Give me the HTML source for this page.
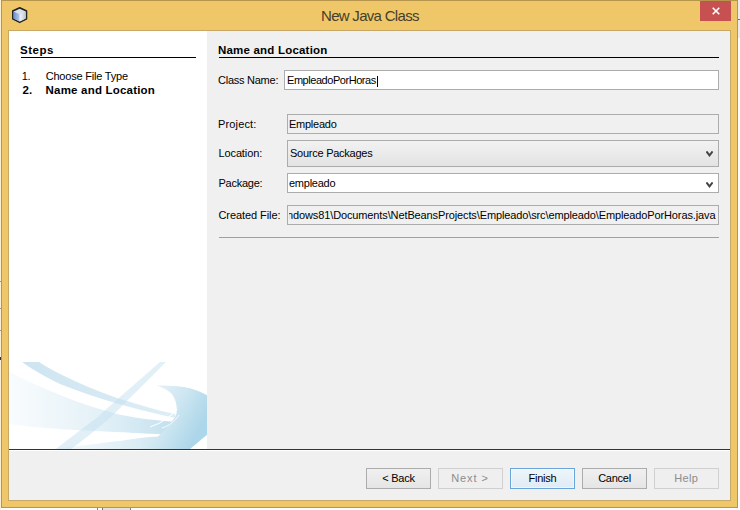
<!DOCTYPE html>
<html><head><meta charset="utf-8">
<style>
*{margin:0;padding:0;box-sizing:border-box}
html,body{width:740px;height:510px;overflow:hidden;background:#fff;position:relative;font-family:"Liberation Sans",sans-serif;-webkit-font-smoothing:antialiased}
.a{position:absolute}
.t{position:absolute;white-space:nowrap;font-size:11px;color:#000;line-height:13px;letter-spacing:-0.25px}
.b{font-weight:bold;font-size:11.5px;letter-spacing:0.2px}
#frame{left:1px;top:0;width:737px;height:508px;background:#efc768;border:1px solid #b5964c}
#content{left:8px;top:30px;width:723px;height:471px;border:1px solid #c8a866;background:#f0f0f0;box-shadow:inset 0 0 0 1px #f9f1e0}
#left{left:9px;top:31px;width:198px;height:418px;background:#fff}
.field{position:absolute;border:1px solid #acacac;background:#fff}
.btn{position:absolute;top:468px;width:65px;height:21px;border:1px solid #acacac;background:linear-gradient(#f0f0f0,#e5e5e5);font-size:11px;text-align:center;line-height:19px;color:#000;letter-spacing:-0.25px}
</style></head><body>
<div class="a" style="left:0;top:0;width:1px;height:510px;background:#fbefd6"></div>
<div id="frame" class="a"></div>
<div class="a" style="left:0;top:281px;width:1px;height:1px;background:#999"></div><div class="a" style="left:0;top:308px;width:1px;height:1px;background:#999"></div><div class="a" style="left:0;top:330px;width:1px;height:1px;background:#999"></div><div class="a" style="left:0;top:357px;width:1px;height:3px;background:#333"></div>
<!-- title bar icon -->
<svg class="a" style="left:11px;top:6px" width="18" height="18" viewBox="0 0 18 18">
  <defs>
    <linearGradient id="cl" x1="0" x2="1" y1="0" y2="0"><stop offset="0" stop-color="#6a8fd2"/><stop offset="1" stop-color="#b6cbea"/></linearGradient>
    <linearGradient id="cr" x1="0" x2="1" y1="0" y2="0"><stop offset="0" stop-color="#f2f6fa"/><stop offset="1" stop-color="#bcc8d4"/></linearGradient>
    <linearGradient id="ct" x1="0" x2="0" y1="0" y2="1"><stop offset="0" stop-color="#e8eef4"/><stop offset="1" stop-color="#d6e0ea"/></linearGradient>
  </defs>
  <path d="M8.7 1.5 L15.7 4.8 L15.7 13 L8.7 16.6 L1.6 13 L1.6 4.8 Z" fill="#222" stroke="#222" stroke-width="1.1" stroke-linejoin="round"/>
  <path d="M8.7 2.7 L14.7 5.4 L14.7 12.5 L8.7 15.4 L2.6 12.5 L2.6 5.4 Z" fill="#d8e2ec"/>
  <path d="M2.6 5.6 L8.7 8.2 L8.7 15.4 L2.6 12.5 Z" fill="url(#cl)"/>
  <path d="M8.7 8.2 L14.7 5.6 L14.7 12.5 L8.7 15.4 Z" fill="url(#cr)"/>
</svg>
<div class="t" style="left:321px;top:7px;font-size:15px;line-height:17px;letter-spacing:-0.7px;color:#463e2c">New Java Class</div>
<div class="a" style="left:700px;top:1px;width:31px;height:20px;background:#c75050"></div>
<svg class="a" style="left:712px;top:7.3px" width="8" height="8" viewBox="0 0 8 8"><path d="M0.7 0.7 L7.3 7.3 M7.3 0.7 L0.7 7.3" stroke="#fff" stroke-width="1.6"/></svg>

<div id="content" class="a"></div>
<div id="left" class="a"></div>
<svg class="a" style="left:9px;top:355px" width="198" height="94" viewBox="9 355 198 94">
  <defs>
    <linearGradient id="gB" x1="9" x2="185" y1="0" y2="0" gradientUnits="userSpaceOnUse"><stop offset="0" stop-color="#d4e9f3" stop-opacity="0.15"/><stop offset="0.55" stop-color="#c8e3f0" stop-opacity="0.55"/><stop offset="1" stop-color="#b8dbeb" stop-opacity="0.95"/></linearGradient>
    <linearGradient id="gE" x1="40" x2="190" y1="0" y2="0" gradientUnits="userSpaceOnUse"><stop offset="0" stop-color="#d4e9f3" stop-opacity="0.1"/><stop offset="1" stop-color="#bcdcec" stop-opacity="0.9"/></linearGradient>
    <linearGradient id="gA" x1="20" x2="180" y1="362" y2="415" gradientUnits="userSpaceOnUse"><stop offset="0" stop-color="#c8e2ef" stop-opacity="0.9"/><stop offset="1" stop-color="#c4e0ee" stop-opacity="0.55"/></linearGradient>
    <linearGradient id="gD" x1="155" x2="208" y1="386" y2="415" gradientUnits="userSpaceOnUse"><stop offset="0" stop-color="#e6f2f8"/><stop offset="0.5" stop-color="#cde6f1"/><stop offset="1" stop-color="#acd6e9"/></linearGradient>
  </defs>
  <path d="M9 372 C25 380 45 389 60 395 C80 403 98 409 117 414 C140 419 160 421 178 422 L182 435 C150 434 135 433 117 432 C95 431 75 430 60 429 C40 428 25 426 9 424 Z" fill="url(#gB)"/>
  <path d="M50 449 C80 446 110 442 140 438 C160 436 175 436 185 436 L175 449 Z" fill="url(#gE)"/>
  <path d="M22 362 L39 362 C45 366 52 370 60 374 C78 383 97 391 117 398 C137 404 155 410 175 414 L176 418 C155 414 137 409 117 403.5 C97 398 78 391 60 384 C45 377 32 369 22 362 Z" fill="url(#gA)"/>
  <path d="M160 362 L166 362 C150 378 128 400 111 417 C97 429 83 440 71 449 L56 449 C70 438 84 427 98 417 C118 398 142 378 160 362 Z" fill="#c4e0ef" fill-opacity="0.5"/>
  <path d="M156 385.5 C168 385.5 176 386 184 387 C194 389 202 392 208 396 L208 434 L190 449 L140 449 C152 442 162 434 168 426 C173 420 176 417 176.5 413 C177.5 407 176 400 172 394 C168 390 162 387 156 385.5 Z" fill="url(#gD)"/>
  <path d="M177 409 C170 418 162 423 150 427" stroke="#fff" stroke-width="1.2" fill="none" opacity="0.9"/>
  <path d="M179 415 C175 421 169 426 162 428" stroke="#fff" stroke-width="1" fill="none" opacity="0.8"/>
  <path d="M118 441 C128 439 138 437 146 436" stroke="#fff" stroke-width="1" fill="none" opacity="0.7"/>
</svg>

<div class="t b" style="left:20px;top:44px;letter-spacing:0.5px">Steps</div>
<div class="a" style="left:21px;top:57px;width:175px;height:1px;background:#000"></div>
<div class="t" style="left:21.7px;top:70px">1.</div>
<div class="t" style="left:45.7px;top:70px;letter-spacing:-0.2px">Choose File Type</div>
<div class="t b" style="left:22.4px;top:84px">2.</div>
<div class="t b" style="left:45.6px;top:84px">Name and Location</div>

<div class="t b" style="left:218px;top:44px">Name and Location</div>
<div class="a" style="left:219px;top:57px;width:500px;height:1px;background:#000"></div>

<div class="t" style="left:218px;top:74px">Class Name:</div>
<div class="field" style="left:284px;top:70px;width:435px;height:20px"></div>
<div class="t" style="left:287px;top:74px;letter-spacing:-0.45px">EmpleadoPorHoras</div>
<div class="a" style="left:377px;top:76px;width:1px;height:11px;background:#000"></div>

<div class="t" style="left:218px;top:118px;letter-spacing:0.15px">Project:</div>
<div class="field" style="left:287px;top:114px;width:432px;height:20px;background:#f0f0f0"></div>
<div class="t" style="left:289px;top:118px">Empleado</div>

<div class="t" style="left:218.5px;top:147px;letter-spacing:-0.12px">Location:</div>
<div class="field" style="left:287px;top:140px;width:432px;height:27px;background:linear-gradient(#f2f2f2,#e3e3e3)"></div>
<div class="t" style="left:290px;top:147px">Source Packages</div>
<svg class="a" style="left:706px;top:151px" width="7" height="7" viewBox="0 0 7 7"><path d="M1 1.2 L3.5 4.4 L6 1.2" stroke="#444" stroke-width="2" fill="none" stroke-linecap="square"/></svg>

<div class="t" style="left:218.5px;top:177px;letter-spacing:-0.25px">Package:</div>
<div class="field" style="left:287px;top:173px;width:432px;height:20px"></div>
<div class="t" style="left:289px;top:177px">empleado</div>
<svg class="a" style="left:706px;top:182px" width="7" height="7" viewBox="0 0 7 7"><path d="M1 1.2 L3.5 4.4 L6 1.2" stroke="#444" stroke-width="2" fill="none" stroke-linecap="square"/></svg>

<div class="t" style="left:218.5px;top:209px;letter-spacing:-0.08px">Created File:</div>
<div class="field" style="left:287px;top:205px;width:432px;height:20px;background:#f0f0f0"></div>
<div class="a" style="left:289px;top:206px;width:428px;height:18px;overflow:hidden"><div id="cf" class="t" style="left:-2px;top:3px;letter-spacing:-0.12px">ndows81\Documents\NetBeansProjects\Empleado\src\empleado\EmpleadoPorHoras.java</div></div>

<div class="a" style="left:219px;top:237px;width:500px;height:1px;background:#a0a0a0"></div>

<div class="a" style="left:9px;top:449px;width:721px;height:1px;background:#333"></div>
<div class="a" style="left:9px;top:450px;width:721px;height:1px;background:#fff"></div>

<div class="btn" style="left:366px">&lt; Back</div>
<div class="btn" style="left:438px;color:#8c8c8c;background:#efefef;border-color:#d0d0d0;letter-spacing:0.9px;text-indent:-1px">Next &gt;</div>
<div class="btn" style="left:510px;border-color:#6aa5da;background:linear-gradient(#eef5fb,#e0ebf5);box-shadow:inset 0 0 0 1px rgba(255,255,255,0.5)">Finish</div>
<div class="btn" style="left:582px">Cancel</div>
<div class="btn" style="left:654px;color:#8c8c8c;background:#efefef;border-color:#d0d0d0;letter-spacing:0.3px;text-indent:-0.5px">Help</div>
<div class="a" style="left:97px;top:508px;width:1px;height:2px;background:#808080"></div><div class="a" style="left:102px;top:508px;width:1px;height:2px;background:#707070"></div><div class="a" style="left:103px;top:508px;width:27px;height:2px;background:#e3e3e3"></div><div class="a" style="left:130px;top:508px;width:1px;height:2px;background:#808080"></div>
<div class="a" style="left:738px;top:0;width:2px;height:38px;background:#e8edf0"></div><div class="a" style="left:738px;top:19px;width:2px;height:1px;background:#6c757a"></div>
</body></html>
